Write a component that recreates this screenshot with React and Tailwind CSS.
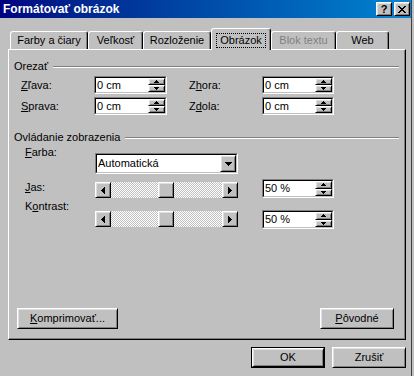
import React from 'react';

const raised =
  'bg-[#c0c0c0] border border-t-white border-l-white border-r-black border-b-black shadow-[inset_1px_1px_#dfdfdf,inset_-1px_-1px_#808080]';

function Px({ w, h, cells }) {
  // tiny pixel glyphs for arrows and the close cross
  return (
    <svg width={w} height={h} shapeRendering="crispEdges" className="block">
      {cells.map(([x, y, cw, ch], i) => (
        <rect key={i} x={x} y={y} width={cw} height={ch} fill="#000" />
      ))}
    </svg>
  );
}

const upArrow = [[2, 0, 1, 1], [1, 1, 3, 1], [0, 2, 5, 1]];
const downArrow = [[0, 0, 5, 1], [1, 1, 3, 1], [2, 2, 1, 1]];
const comboArrow = [[0, 0, 7, 1], [1, 1, 5, 1], [2, 2, 3, 1], [3, 3, 1, 1]];
const leftArrow = [[0, 3, 1, 1], [1, 2, 1, 3], [2, 1, 1, 5], [3, 0, 1, 7]];
const rightArrow = [[0, 0, 1, 7], [1, 1, 1, 5], [2, 2, 1, 3], [3, 3, 1, 1]];
const cross = [
  [0, 0, 2, 1], [6, 0, 2, 1],
  [1, 1, 2, 1], [5, 1, 2, 1],
  [2, 2, 4, 1],
  [3, 3, 2, 1],
  [2, 4, 4, 1],
  [1, 5, 2, 1], [5, 5, 2, 1],
  [0, 6, 2, 1], [6, 6, 2, 1],
];

function Sunken({ className = '', children }) {
  return (
    <div className={`border border-t-[#808080] border-l-[#808080] border-b-white border-r-white ${className}`}>
      <div className="h-full flex items-center bg-white border border-t-black border-l-black border-b-[#c0c0c0] border-r-[#c0c0c0]">
        {children}
      </div>
    </div>
  );
}

function SpinBox({ value, className = '' }) {
  return (
    <Sunken className={className}>
      <span className="flex-1 pl-[1px] whitespace-nowrap">{value}</span>
      <div className="h-full w-[17px] flex flex-col">
        <div className={`${raised} flex-1 flex items-center justify-center`}>
          <Px w={5} h={3} cells={upArrow} />
        </div>
        <div className={`${raised} flex-1 flex items-center justify-center`}>
          <Px w={5} h={3} cells={downArrow} />
        </div>
      </div>
    </Sunken>
  );
}

function Slider({ className = '' }) {
  return (
    <div className={`w-[143px] h-[16px] flex ${className}`}>
      <div className={`${raised} w-[16px] h-[16px] flex items-center justify-center`}>
        <Px w={4} h={7} cells={leftArrow} />
      </div>
      <div className="flex-1 flex bg-[image:repeating-conic-gradient(#ffffff_0%_25%,#c0c0c0_0%_50%)] bg-size-[2px_2px]">
        <div className={`${raised} w-[16px] h-[16px] ml-[47px]`} />
      </div>
      <div className={`${raised} w-[16px] h-[16px] flex items-center justify-center`}>
        <Px w={4} h={7} cells={rightArrow} />
      </div>
    </div>
  );
}

function GroupHeader({ label, className = '' }) {
  return (
    <div className={`flex items-center h-[13px] pl-[5px] pr-[6px] ${className}`}>
      <span className="whitespace-nowrap">{label}</span>
      <div className="flex-1 ml-[5px] h-[2px] border-t border-t-[#808080] border-b border-b-white" />
    </div>
  );
}

function Tab({ label, w, disabled }) {
  return (
    <div
      className={`${w} h-[18px] pt-[2px] flex justify-center rounded-t-[3px] border-t border-l border-r border-t-white border-l-white border-r-black shadow-[inset_-1px_0_#808080] whitespace-nowrap ${disabled ? 'text-[#808080]' : ''}`}
    >
      {label}
    </div>
  );
}

function Button({ className = '', children }) {
  return (
    <div className={`${raised} h-[21px] flex items-center justify-center whitespace-nowrap ${className}`}>
      {children}
    </div>
  );
}

export default function App() {
  return (
    <div className="flex w-[414px] h-[376px] overflow-hidden bg-[#c0c0c0] text-black text-[11px] leading-[13px] font-['Liberation_Sans',Arial,sans-serif]">
      <div className="w-[411px] flex flex-col">
        {/* title bar */}
        <div className="h-[18px] flex items-center pl-[3px] pr-[1px] bg-linear-to-r from-[#000080] to-[#1084d0]">
          <span className="flex-1 text-white font-bold text-[12px] whitespace-nowrap">Formátovať obrázok</span>
          <div className={`${raised} w-[16px] h-[14px] flex items-center justify-center font-bold text-[11px] leading-none`}>?</div>
          <div className={`${raised} w-[16px] h-[14px] ml-[2px] flex items-center justify-center`}>
            <Px w={8} h={7} cells={cross} />
          </div>
        </div>

        <div className="pl-[8px] pt-[10px]">
          {/* tabs */}
          <div className="ml-[2px] h-[21px] flex items-end">
            <Tab label="Farby a čiary" w="w-[78px]" />
            <Tab label="Veľkosť" w="w-[55px]" />
            <Tab label="Rozloženie" w="w-[68px]" />
            <div className="relative z-10 w-[60px] h-[22px] -mb-[1px] pt-[4px] flex justify-center bg-[#c0c0c0] rounded-t-[3px] border-t border-l border-r border-t-white border-l-white border-r-black shadow-[inset_-1px_0_#808080]">
              <span className="h-[15px] px-[3px] border border-dotted border-black whitespace-nowrap">Obrázok</span>
            </div>
            <Tab label="Blok textu" w="w-[65px]" disabled />
            <Tab label="Web" w="w-[53px]" />
          </div>

          {/* panel */}
          <div className="w-[398px] h-[291px] flex flex-col border border-t-white border-l-white border-r-black border-b-black shadow-[inset_-1px_-1px_#808080]">
            <GroupHeader label="Orezať" className="mt-[10px]" />
            <div className="flex items-center h-[18px] mt-[3px] pl-[12px]">
              <span className="w-[73px]"><u>Z</u>ľava:</span>
              <SpinBox value="0 cm" className="w-[73px] h-[18px]" />
              <span className="w-[73px] ml-[22px]">Z<u>h</u>ora:</span>
              <SpinBox value="0 cm" className="w-[72px] h-[18px]" />
            </div>
            <div className="flex items-center h-[18px] mt-[3px] pl-[12px]">
              <span className="w-[73px]"><u>S</u>prava:</span>
              <SpinBox value="0 cm" className="w-[73px] h-[18px]" />
              <span className="w-[73px] ml-[22px]">Z<u>d</u>ola:</span>
              <SpinBox value="0 cm" className="w-[72px] h-[18px]" />
            </div>

            <GroupHeader label="Ovládanie zobrazenia" className="mt-[16px]" />
            <div className="flex items-start pl-[16px]">
              <span className="w-[70px] mt-[2px]"><u>F</u>arba:</span>
              <Sunken className="w-[143px] h-[21px] mt-[9px]">
                <span className="flex-1 pl-[1px]">Automatická</span>
                <div className={`${raised} w-[16px] h-full flex items-center justify-center`}>
                  <Px w={7} h={4} cells={comboArrow} />
                </div>
              </Sunken>
            </div>
            <div className="flex items-start pl-[16px] mt-[5px]">
              <span className="w-[70px] mt-[2px]"><u>J</u>as:</span>
              <Slider className="mt-[3px]" />
              <SpinBox value="50 %" className="w-[72px] h-[19px] ml-[24px]" />
            </div>
            <div className="flex items-start pl-[16px] mt-[1px]">
              <span className="w-[70px] mt-[1px]">K<u>o</u>ntrast:</span>
              <Slider className="mt-[12px]" />
              <SpinBox value="50 %" className="w-[72px] h-[19px] ml-[24px] mt-[11px]" />
            </div>

            <div className="mt-auto mb-[10px] flex justify-between pl-[8px] pr-[11px]">
              <Button className="w-[101px]"><u>K</u>omprimovať...</Button>
              <Button className="w-[74px]"><u>P</u>ôvodné</Button>
            </div>
          </div>

          {/* dialog buttons */}
          <div className="w-[398px] mt-[7px] flex justify-end gap-[7px]">
            <div className="w-[74px] h-[21px] border border-black">
              <div className={`${raised} h-full flex items-center justify-center`}>OK</div>
            </div>
            <Button className="w-[74px]">Zrušiť</Button>
          </div>
        </div>
      </div>
      <div className="w-[1px] bg-[#404040]" />
      <div className="flex-1" />
    </div>
  );
}
